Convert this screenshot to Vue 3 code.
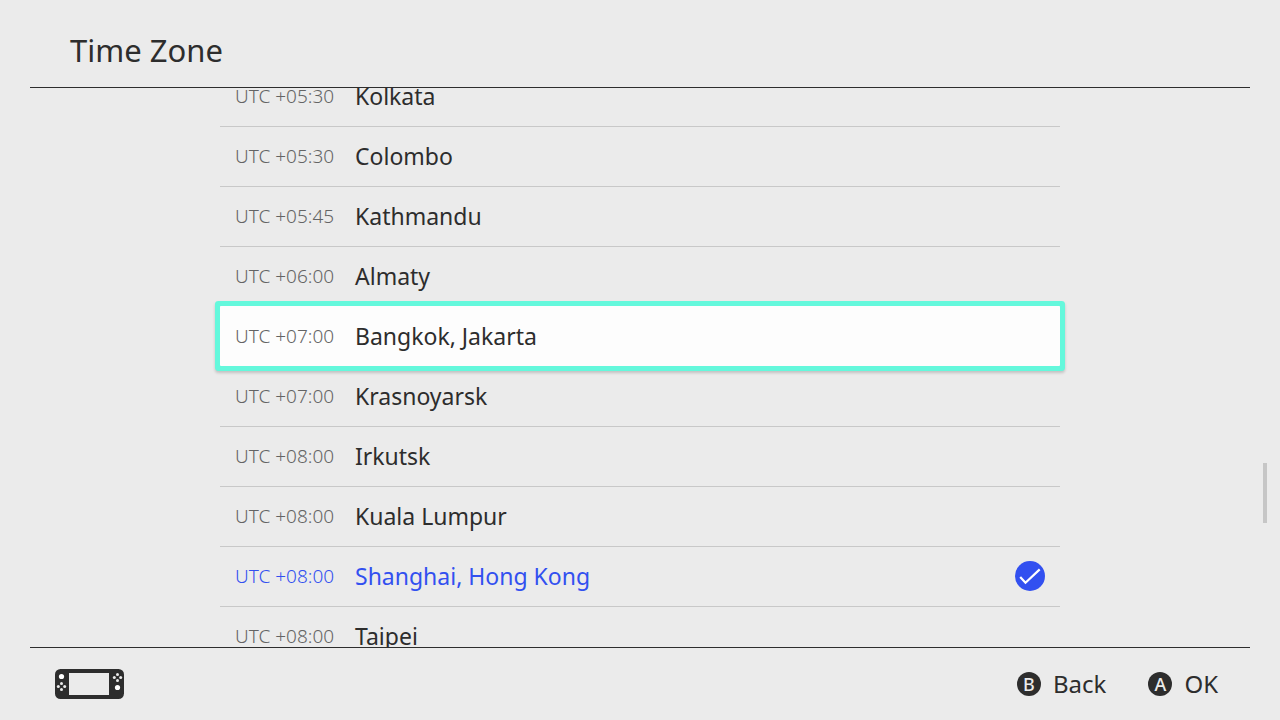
<template>
  <div class="screen">
    <header class="header">
      <h1>Time Zone</h1>
    </header>

    <main ref="viewport" class="viewport">
      <ul class="zones">
        <li v-for="(zone, index) in zones" :key="zone.name">
          <button
            type="button"
            class="zone"
            :class="{ focused: index === focused, selected: index === selected }"
            :aria-pressed="index === selected"
            @mouseenter="focused = index"
            @click="selected = index"
          >
            <span class="offset">UTC {{ zone.offset }}</span>
            <span class="name">{{ zone.name }}</span>
            <svg v-if="index === selected" class="check" viewBox="0 0 30 30" aria-hidden="true">
              <circle cx="15" cy="15" r="15" fill="#3250f0" />
              <path d="M5.2 16 L10.5 21.8 L24.7 8.4" fill="none" stroke="#fff" stroke-width="2.2" />
            </svg>
          </button>
        </li>
      </ul>
    </main>
    <div class="scrollbar"></div>

    <footer class="footer">
      <svg class="console" viewBox="0 0 70 30" aria-hidden="true">
        <rect width="69" height="30" rx="5.5" fill="#2d2d2d" />
        <rect x="14" y="4" width="40" height="22" fill="#ebebeb" />
        <g fill="#fff">
          <circle cx="6.5" cy="7.5" r="2.6" />
          <circle cx="62.5" cy="18.5" r="2.6" />
        </g>
        <g fill="#ebebeb">
          <circle cx="6.5" cy="14.5" r="1.5" />
          <circle cx="3.3" cy="17.5" r="1.5" />
          <circle cx="9.7" cy="17.5" r="1.5" />
          <circle cx="6.5" cy="20.6" r="1.5" />
          <circle cx="62.5" cy="5.4" r="1.5" />
          <circle cx="59.3" cy="8.5" r="1.5" />
          <circle cx="65.7" cy="8.5" r="1.5" />
          <circle cx="62.5" cy="11.6" r="1.5" />
        </g>
      </svg>
      <div class="actions">
        <button type="button" class="action"><span class="key">B</span>Back</button>
        <button type="button" class="action"><span class="key">A</span>OK</button>
      </div>
    </footer>
  </div>
</template>

<script setup>
import { onMounted, ref } from "vue";

const zones = [
  { offset: "+05:30", name: "Kolkata" },
  { offset: "+05:30", name: "Colombo" },
  { offset: "+05:45", name: "Kathmandu" },
  { offset: "+06:00", name: "Almaty" },
  { offset: "+07:00", name: "Bangkok, Jakarta" },
  { offset: "+07:00", name: "Krasnoyarsk" },
  { offset: "+08:00", name: "Irkutsk" },
  { offset: "+08:00", name: "Kuala Lumpur" },
  { offset: "+08:00", name: "Shanghai, Hong Kong" },
  { offset: "+08:00", name: "Taipei" },
];

const viewport = ref(null);
const focused = ref(4);
const selected = ref(8);

onMounted(() => {
  viewport.value.scrollTop = 22;
});
</script>

<style>
body {
  margin: 0;
  background: #ebebeb;
}
</style>

<style scoped>
.screen {
  position: relative;
  display: flex;
  flex-direction: column;
  box-sizing: border-box;
  height: 100vh;
  padding: 0 30px;
  background: #ebebeb;
  color: #2d2d2d;
  font-family: "Noto Sans", sans-serif;
}

.header {
  flex: none;
  display: flex;
  align-items: center;
  box-sizing: border-box;
  height: 88px;
  padding: 12px 40px 0;
  border-bottom: 1px solid #2d2d2d;
}

h1 {
  margin: 0;
  font-size: 31px;
  font-weight: 400;
  line-height: 40px;
}

.viewport {
  flex: 1;
  min-height: 0;
  overflow-y: scroll;
  scrollbar-width: none;
}

.zones {
  max-width: 840px;
  margin: 0 auto;
  padding: 0;
  list-style: none;
}

.zone {
  display: flex;
  align-items: center;
  box-sizing: border-box;
  width: 100%;
  height: 60px;
  padding: 0 15px 2px;
  border: 0;
  border-top: 1px solid #c8c8c8;
  background: none;
  color: inherit;
  font-family: inherit;
  text-align: left;
  cursor: pointer;
}

.zone.focused {
  position: relative;
  z-index: 1;
  border-top-color: #fdfdfd;
  border-radius: 1px;
  background: #fdfdfd;
  box-shadow: 0 0 0 5px #64f8dc, 0 2px 3px 5px rgba(0, 0, 0, 0.18);
}

.offset {
  width: 120px;
  color: #646464;
  font-size: 19px;
  font-weight: 300;
}

.name {
  flex: 1;
  font-size: 23px;
  line-height: 32px;
}

.zone.selected,
.selected .offset {
  color: #3250f0;
}

.check {
  width: 30px;
  height: 30px;
}

.scrollbar {
  position: absolute;
  top: 463px;
  right: 13px;
  width: 4px;
  height: 60px;
  background: #c6c6c6;
}

.footer {
  flex: none;
  display: flex;
  align-items: center;
  justify-content: space-between;
  box-sizing: border-box;
  height: 73px;
  padding: 0 32px 0 25px;
  border-top: 1px solid #2d2d2d;
}

.console {
  width: 70px;
  height: 30px;
}

.actions {
  display: flex;
  gap: 42px;
}

.action {
  display: flex;
  align-items: center;
  gap: 12px;
  padding: 0;
  border: 0;
  background: none;
  color: inherit;
  font-family: inherit;
  font-size: 24px;
  line-height: 32px;
  cursor: pointer;
}

.key {
  width: 24px;
  height: 24px;
  border-radius: 50%;
  background: #2d2d2d;
  color: #ebebeb;
  font-size: 18px;
  font-weight: 500;
  line-height: 24px;
  text-align: center;
}
</style>
